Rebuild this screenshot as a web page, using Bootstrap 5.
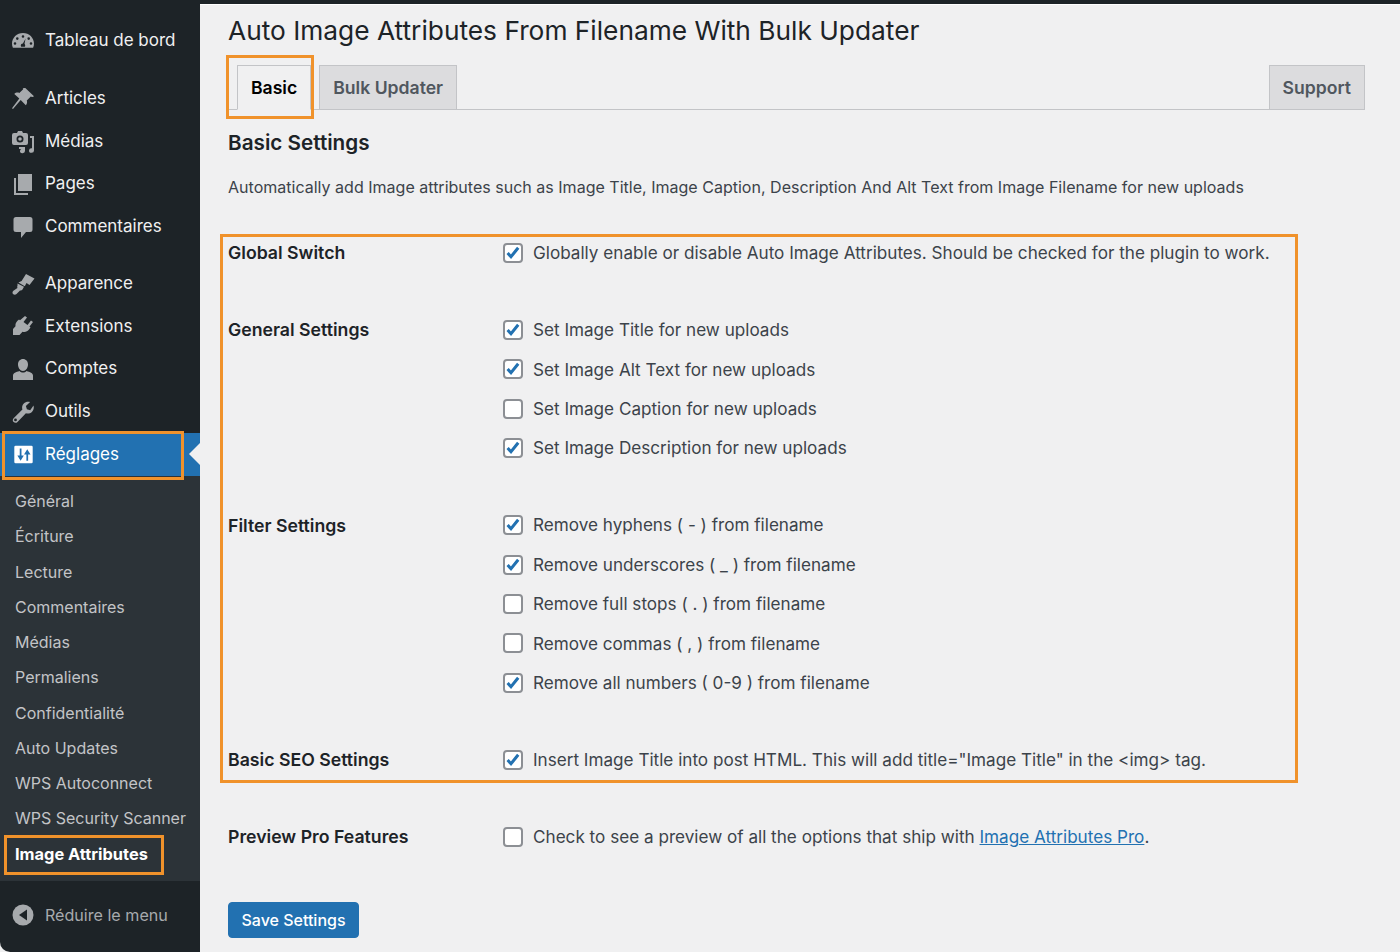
<!DOCTYPE html>
<html lang="fr"><head><meta charset="utf-8"><title>Auto Image Attributes</title>
<link href="https://cdn.jsdelivr.net/npm/bootstrap@5.3.0/dist/css/bootstrap.min.css" rel="stylesheet">
<style>
html,body{height:952px;overflow:hidden}
body{font-family:Inter,Roboto,"Liberation Sans",sans-serif;background:#f0f0f1;color:#3c434a;position:relative}
.shell{height:952px}
.wp-side{width:200px;flex:none;background:#1d2327;color:#f0f0f1;font-size:17px;padding-top:18.5px;border-bottom-left-radius:10px}
.mi{height:42.7px;padding-left:11px;gap:10px}
.mi svg{width:24px;height:24px;fill:#a7aaad;flex:none}
.mi-top{margin-bottom:14px;height:45px}
.mi-sep{margin-top:14px}
.mi-active{background:#2271b1;color:#fff;position:relative}
.mi-active svg{fill:#fff;width:21px;height:21px;margin:0 1.5px}
.mi-active::after{content:"";position:absolute;right:0;top:50%;margin-top:-11px;border:11px solid transparent;border-right-color:#f0f0f1;border-left-width:0}
.subm{background:#2c3338;padding:8.500px 0 9.500px 15px;font-size:16px;color:#c3c4c7}
.subm div{height:35.25px;line-height:35.25px}
.subm .cur{color:#fff;font-weight:700;font-size:16.400px}
.collapse-row{height:68px;padding-left:11px;gap:10px;color:#a7aaad;font-size:16.1px}
.collapse-row svg{width:24px;height:24px;flex:none}
.wp-main{padding:5px 35px 0 28px;border-top:4px solid #1d2327;box-shadow:inset 0 1px 0 #fff;min-width:0}
.page-h{font-size:26.3px;line-height:42px;color:#1d2327;font-weight:400;margin:0;padding-top:1px}
.tabbar{height:52px;margin-top:6px;border-bottom:1px solid #c3c4c7;padding-left:9px;gap:8px}
.tb{height:45px;margin-bottom:-1px;border:1px solid #c3c4c7;background:#dcdcde;color:#50575e;font-weight:600;font-size:17.6px;display:flex;align-items:center;padding:2px 13px 0}
.tb-on{background:#f0f0f1;color:#000;border-bottom-color:#f0f0f1}
.sec-h{font-size:20.7px;font-weight:600;color:#1d2327;margin:18px 0 0;line-height:30px}
.intro{font-size:16.05px;margin:16px 0 0;line-height:26px}
.sets{margin-top:33.4px;font-size:17.14px}
.setrow{display:flex;margin-bottom:37.6px}
.setrow:last-child{margin-bottom:0}
.setname{width:275px;flex:none;font-weight:600;color:#1d2327;line-height:39.4px;font-size:17.7px}
.opt{height:39.4px;display:flex;align-items:center;gap:10px}
.cbx{width:20px;height:20px;margin:0;flex:none;appearance:none;background:#fff;border:2px solid #8c8f94;border-radius:4px;background-position:center;background-repeat:no-repeat}
.cbx:checked{background-image:url("data:image/svg+xml,%3Csvg xmlns='http://www.w3.org/2000/svg' viewBox='0 0 16 16'%3E%3Cpath d='M2.600 8l3.400 3.800 7.200-9' fill='none' stroke='%232271b1' stroke-width='3'/%3E%3C/svg%3E")}
.wplink{color:#2271b1}
.savebtn{background:#2271b1;border:1px solid #2271b1;color:#fff;border-radius:4px;font-size:16px;font-weight:500;height:36px;width:131px;padding:0;margin-top:45px}
.hl{position:absolute;border:3px solid #f0922b;pointer-events:none}
.hl-a{left:226px;top:55px;width:88px;height:64px}
.hl-b{left:220px;top:234px;width:1078px;height:549px}
.hl-c{left:2px;top:431px;width:182px;height:49px}
.hl-d{left:4px;top:835px;width:160px;height:40px}
</style></head><body>
<div class="shell d-flex">
<nav class="wp-side d-flex flex-column">
<div class="mi mi-top d-flex align-items-center"><svg viewBox="0 0 24 24"><path fill-rule="evenodd" d="M12 4C5.900 4 1 8.700 1 14.600c0 1.500.3 2.900.9 4.200h20.200c.6-1.300.9-2.700.9-4.200C23 8.700 18.100 4 12 4zm0 2.200a1.300 1.300 0 110 2.600 1.300 1.300 0 010-2.600zM6.300 8.300a1.300 1.300 0 110 2.600 1.300 1.300 0 010-2.600zm11.400 0a1.300 1.300 0 110 2.600 1.300 1.300 0 010-2.600zM4 13.200a1.300 1.300 0 110 2.600 1.300 1.300 0 010-2.600zm16 0a1.300 1.300 0 110 2.600 1.300 1.300 0 010-2.600zM14.600 9.500l-1.100 5.300c.4.400.7 1 .7 1.600 0 .5-.2.9-.4 1.300h-3.600c-.2-.4-.4-.8-.4-1.300 0-1.100.9-2 2-2h.1z"/></svg><span>Tableau de bord</span></div>
<div class="mi d-flex align-items-center"><svg viewBox="0 0 24 24"><path d="M14.300 1l8.700 8.200c-.8.900-2.300 1-3.200.4l-4 3.800c.7 1.700.2 3.500-1 4.800L9.700 12.900 2 22l-1-.8 7.300-9.600-5-4.700c1.300-1.300 3.300-1.800 5-1l3.900-3.700c-.6-.8-.7-.9 2.100-1.200z"/></svg><span>Articles</span></div>
<div class="mi d-flex align-items-center"><svg viewBox="0 0 24 24"><path fill-rule="evenodd" d="M3 3h3l1-2h4l1 2h3a2 2 0 012 2v8a2 2 0 01-2 2H3a2 2 0 01-2-2V5a2 2 0 012-2zm6 2.500a3.500 3.500 0 100 7 3.500 3.500 0 000-7zm0 1.700a1.800 1.800 0 110 3.600 1.800 1.800 0 010-3.600z"/><path d="M19 6h4v14.500a2.500 2.300 0 11-2-2.200V8h-2zM8 17h6v4a2.500 2.200 0 11-2-2.200V19H8z"/></svg><span>Médias</span></div>
<div class="mi d-flex align-items-center"><svg viewBox="0 0 24 24"><path d="M7 2h14v17H7zM3 6h2v15h12v2H3z"/></svg><span>Pages</span></div>
<div class="mi d-flex align-items-center"><svg viewBox="0 0 24 24"><path d="M5 2h14a2.500 2.500 0 012.500 2.500v10A2.500 2.500 0 0119 17h-4l-5 6v-6H5a2.500 2.500 0 01-2.500-2.500v-10A2.500 2.500 0 015 2z"/></svg><span>Commentaires</span></div>
<div class="mi mi-sep d-flex align-items-center"><svg viewBox="0 0 24 24"><path d="M15 2l8.500 4.500-5 6.500-3-2-1.700 3.200L7.400 10.500l3.200-1.600zM6.500 11.500l6.500 3.300-1.500 2.700c-.5.900-1.500 1.200-2.500 1l-3.500 3.500c-1 .9-2.500.9-3.500 0-.8-1-.6-2.400.4-3.200l4-2.800c-.3-.9-.3-1.700.1-2.500z"/></svg><span>Apparence</span></div>
<div class="mi d-flex align-items-center"><svg viewBox="0 0 24 24"><path d="M14 2l2 1.500-3.500 4.500 4 3 3.500-4.500 2 1.500-3.500 4.500 1 1-1.500 2c-1.500 2-4 3-6.500 2.200L8.500 21H2v-6l2.500-2.800c-.3-2 .5-4 2-5.400L8 5.500l1 .8z"/></svg><span>Extensions</span></div>
<div class="mi d-flex align-items-center"><svg viewBox="0 0 24 24"><path d="M12 2c2.900 0 5 2.300 5 5.500S14.900 14 12 14 7 10.700 7 7.500 9.100 2 12 2zM2 23v-4.500c0-2.200 3-3.500 6.500-4.500 1 1 2.200 1.500 3.500 1.500s2.500-.5 3.500-1.500c3.500 1 6.500 2.300 6.500 4.500V23z"/></svg><span>Comptes</span></div>
<div class="mi d-flex align-items-center"><svg viewBox="0 0 24 24"><path fill-rule="evenodd" d="M22.500 5.500c.7 2.300.1 4.800-1.600 6.400-1.700 1.600-4 2-6 1.300L6.500 22c-1.100 1.100-2.800 1.100-3.900.1-1.100-1.100-1.100-2.800 0-3.900l8.800-8.600c-.7-2.100-.2-4.400 1.400-6 1.600-1.700 4.100-2.200 6.300-1.500l-4.200 4 1 3.200 3.300.9zM4.500 18.500a1.400 1.400 0 100 2.800 1.400 1.400 0 000-2.800z"/></svg><span>Outils</span></div>
<div class="mi mi-active d-flex align-items-center"><svg viewBox="0 0 24 24"><path fill-rule="evenodd" d="M3 2h18a1.500 1.500 0 011.500 1.500v17A1.500 1.500 0 0121 22H3a1.500 1.500 0 01-1.500-1.500v-17A1.500 1.500 0 013 2zm4.700 3v8H5l3.700 6 3.700-6H9.700V5zm8.600 1l-3.700 6h2.700v7h2v-7H20z"/></svg><span>Réglages</span></div>
<div class="subm">
<div>Général</div><div>Écriture</div><div>Lecture</div><div>Commentaires</div><div>Médias</div><div>Permaliens</div><div>Confidentialité</div><div>Auto Updates</div><div>WPS Autoconnect</div><div>WPS Security Scanner</div><div class="cur">Image Attributes</div>
</div>
<div class="collapse-row d-flex align-items-center"><svg viewBox="0 0 24 24"><circle cx="12" cy="12" r="10.500" fill="#a7aaad"/><path d="M16 6.500v11L8 12z" fill="#1d2327"/></svg><span>Réduire le menu</span></div>
</nav>
<main class="wp-main flex-grow-1">
<h1 class="page-h">Auto Image Attributes From Filename With Bulk Updater</h1>
<div class="tabbar d-flex align-items-end">
<div class="tb tb-on">Basic</div><div class="tb">Bulk Updater</div><div class="tb ms-auto">Support</div>
</div>
<h2 class="sec-h">Basic Settings</h2>
<p class="intro">Automatically add Image attributes such as Image Title, Image Caption, Description And Alt Text from Image Filename for new uploads</p>
<div class="sets">
<div class="setrow"><div class="setname">Global Switch</div><div><label class="opt"><input class="cbx" type="checkbox" checked>Globally enable or disable Auto Image Attributes. Should be checked for the plugin to work.</label></div></div>
<div class="setrow"><div class="setname">General Settings</div><div>
<label class="opt"><input class="cbx" type="checkbox" checked>Set Image Title for new uploads</label>
<label class="opt"><input class="cbx" type="checkbox" checked>Set Image Alt Text for new uploads</label>
<label class="opt"><input class="cbx" type="checkbox">Set Image Caption for new uploads</label>
<label class="opt"><input class="cbx" type="checkbox" checked>Set Image Description for new uploads</label></div></div>
<div class="setrow"><div class="setname">Filter Settings</div><div>
<label class="opt"><input class="cbx" type="checkbox" checked>Remove hyphens ( - ) from filename</label>
<label class="opt"><input class="cbx" type="checkbox" checked>Remove underscores ( _ ) from filename</label>
<label class="opt"><input class="cbx" type="checkbox">Remove full stops ( . ) from filename</label>
<label class="opt"><input class="cbx" type="checkbox">Remove commas ( , ) from filename</label>
<label class="opt"><input class="cbx" type="checkbox" checked>Remove all numbers ( 0-9 ) from filename</label></div></div>
<div class="setrow"><div class="setname">Basic SEO Settings</div><div><label class="opt"><input class="cbx" type="checkbox" checked>Insert Image Title into post HTML. This will add title="Image Title" in the &lt;img&gt; tag.</label></div></div>
<div class="setrow"><div class="setname">Preview Pro Features</div><div><label class="opt"><input class="cbx" type="checkbox"><span>Check to see a preview of all the options that ship with <a class="wplink" href="#">Image Attributes Pro</a>.</span></label></div></div>
</div>
<button class="btn savebtn" type="button">Save Settings</button>
</main>
</div>
<div class="hl hl-a"></div><div class="hl hl-b"></div><div class="hl hl-c"></div><div class="hl hl-d"></div>
</body></html>
